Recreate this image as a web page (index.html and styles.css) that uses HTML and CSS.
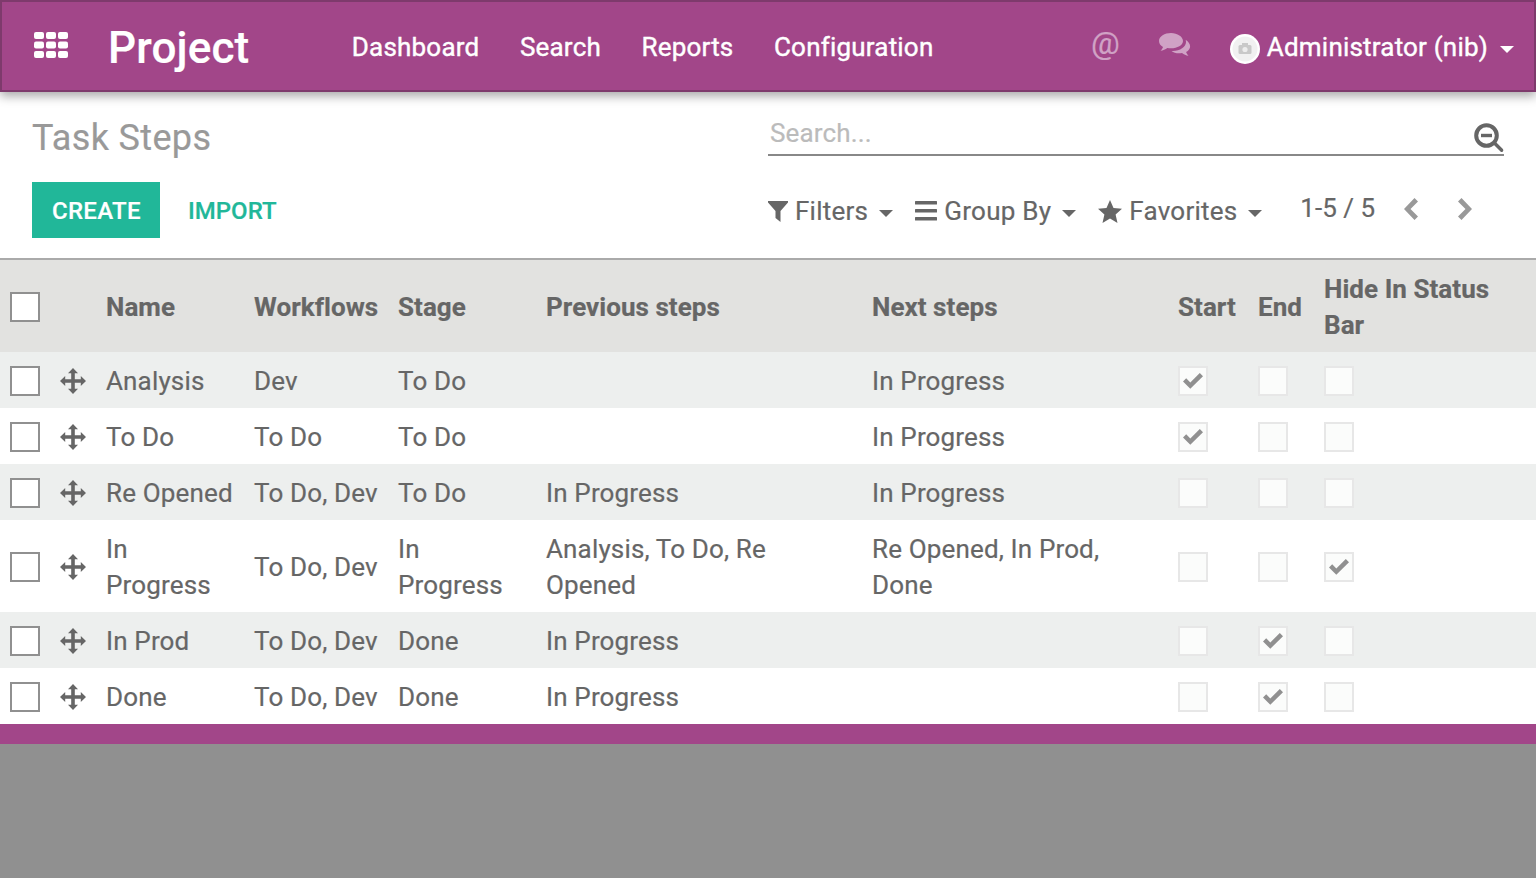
FILE: index.html
```html
<!DOCTYPE html>
<html lang="en">
<head>
<meta charset="utf-8">
<title>Task Steps</title>
<link rel="stylesheet" href="styles.css">
</head>
<body>
<svg class="defs" width="0" height="0" aria-hidden="true">
  <symbol id="move" viewBox="0 0 26 26"><path d="M13 0l5 5.200h-3.200v6h6v-3.200L26 13l-5.200 5v-3.200h-6v6H18L13 26l-5-5.200h3.200v-6h-6V18L0 13l5.200-5v3.200h6v-6H8z"/></symbol>
  <symbol id="check" viewBox="0 0 20 16"><path d="M0 8.500L3.200 5.300 7.300 9.400 16.800 0 20 3.200 7.300 15.800z"/></symbol>
</svg>
<div class="page">
  <header class="navbar">
    <svg class="apps" viewBox="0 0 34 26"><g><rect x="0" y="0" width="10" height="7" rx="2"/><rect x="12" y="0" width="10" height="7" rx="2"/><rect x="24" y="0" width="10" height="7" rx="2"/><rect x="0" y="9.500" width="10" height="7" rx="2"/><rect x="12" y="9.500" width="10" height="7" rx="2"/><rect x="24" y="9.500" width="10" height="7" rx="2"/><rect x="0" y="19" width="10" height="7" rx="2"/><rect x="12" y="19" width="10" height="7" rx="2"/><rect x="24" y="19" width="10" height="7" rx="2"/></g></svg>
    <span class="brand">Project</span>
    <nav class="menu">
      <a>Dashboard</a><a>Search</a><a>Reports</a><a>Configuration</a>
    </nav>
    <div class="systray">
      <span class="at">@</span>
      <svg class="chat" viewBox="0 0 32 26"><path d="M12 1C5.700 1 0 4.500 0 9c0 2.500 1.500 4.500 4 6-.4 1.500-1.300 2.700-2.500 3.800 2.500-.3 5-1.300 6.800-2.800 1.200.2 2.400.3 3.700.3 6.400 0 12-3 12-7.300S18.400 1 12 1z"/><path d="M26.500 7.500c.4 1 .5 1.800.5 2.500 0 5.200-6 8.800-13 9-.7 0-1 0-1.500-.1 1.800 1.500 4.500 2.300 7.500 2.300 1 0 2 0 3-.2 1.800 1.500 4 2.400 6.500 2.800-1.200-1-2-2.300-2.400-3.800 2.500-1.300 4-3.300 4-5.500 0-2.800-2-5.200-4.600-6.800z"/></svg>
      <span class="avatar"><svg viewBox="0 0 30 30"><circle cx="15" cy="15" r="15" fill="#fff"/><circle cx="15" cy="15" r="12.500" fill="#f1f1f1"/><rect x="8.500" y="11" width="13" height="9" rx="1.500" fill="#c9c9c9"/><rect x="12" y="9" width="6" height="3" fill="#c9c9c9"/><circle cx="15" cy="15.500" r="2.600" fill="#ededed"/></svg></span>
      <span class="user">Administrator (nib)</span>
      <span class="caret caret-white"></span>
    </div>
  </header>

  <section class="panel">
    <div class="panel-left">
      <h1 class="title">Task Steps</h1>
      <div class="buttons">
        <button class="btn-create">CREATE</button>
        <button class="btn-import">IMPORT</button>
      </div>
    </div>
    <div class="panel-right">
      <div class="search">
        <span class="placeholder">Search...</span>
        <svg class="search-icon" viewBox="0 0 30 30"><circle cx="12.500" cy="12.500" r="10.300" fill="none" stroke="#666" stroke-width="4"/><rect x="7" y="10.800" width="11" height="3.400" fill="#666"/><path d="M19.500 21.500l2.400-2.400 7 7a1.700 1.700 0 0 1-2.400 2.400z" fill="#666"/></svg>
      </div>
      <div class="controls">
        <div class="filters">
          <span class="filter">
            <svg class="ficon ficon-funnel" viewBox="0 0 20 21"><path d="M0 0h20v1.500L12.500 10v11L7.500 17v-7L0 1.500z"/></svg>Filters<span class="caret"></span>
          </span>
          <span class="filter">
            <svg class="ficon ficon-bars" viewBox="0 0 22 20"><rect y="0" width="22" height="3.600" rx=".5"/><rect y="8" width="22" height="3.600" rx=".5"/><rect y="16" width="22" height="3.600" rx=".5"/></svg>Group By<span class="caret"></span>
          </span>
          <span class="filter">
            <svg class="ficon ficon-star" viewBox="0 0 24 23"><path d="M12 0l3.500 8 8.500.8-6.400 5.700 1.900 8.500L12 18.600 4.500 23l1.900-8.500L0 8.800 8.500 8z"/></svg>Favorites<span class="caret"></span>
          </span>
        </div>
        <div class="pager">
          <span class="pager-text">1-5 / 5</span>
          <svg class="chev chev-prev" viewBox="0 0 16 22"><path d="M11.500 0L15 3.500 7.500 11 15 18.500 11.500 22 1 11z"/></svg>
          <svg class="chev" viewBox="0 0 16 22"><path d="M4.500 0L1 3.500 8.500 11 1 18.500 4.500 22 15 11z"/></svg>
        </div>
      </div>
    </div>
  </section>

  <table class="grid">
    <colgroup>
      <col class="c-sel"><col class="c-handle"><col class="c-name"><col class="c-wf"><col class="c-stage"><col class="c-prev"><col class="c-next"><col class="c-start"><col class="c-end"><col class="c-hide">
    </colgroup>
    <thead>
      <tr>
        <th class="sel"><span class="box"></span></th>
        <th></th>
        <th>Name</th><th>Workflows</th><th>Stage</th><th>Previous steps</th><th>Next steps</th><th>Start</th><th>End</th><th>Hide In Status Bar</th>
      </tr>
    </thead>
    <tbody>
      <tr class="odd">
        <td class="sel"><span class="box"></span></td><td class="handle"><svg class="move"><use href="#move"/></svg></td>
        <td>Analysis</td><td class="wf">Dev</td><td>To Do</td><td></td><td>In Progress</td>
        <td><span class="flag"><svg class="tick"><use href="#check"/></svg></span></td><td><span class="flag"></span></td><td><span class="flag"></span></td>
      </tr>
      <tr>
        <td class="sel"><span class="box"></span></td><td class="handle"><svg class="move"><use href="#move"/></svg></td>
        <td>To Do</td><td class="wf">To Do</td><td>To Do</td><td></td><td>In Progress</td>
        <td><span class="flag"><svg class="tick"><use href="#check"/></svg></span></td><td><span class="flag"></span></td><td><span class="flag"></span></td>
      </tr>
      <tr class="odd">
        <td class="sel"><span class="box"></span></td><td class="handle"><svg class="move"><use href="#move"/></svg></td>
        <td>Re Opened</td><td class="wf">To Do, Dev</td><td>To Do</td><td>In Progress</td><td>In Progress</td>
        <td><span class="flag"></span></td><td><span class="flag"></span></td><td><span class="flag"></span></td>
      </tr>
      <tr>
        <td class="sel"><span class="box"></span></td><td class="handle"><svg class="move"><use href="#move"/></svg></td>
        <td>In Progress</td><td class="wf">To Do, Dev</td><td>In Progress</td><td>Analysis, To Do, Re Opened</td><td>Re Opened, In Prod, Done</td>
        <td><span class="flag"></span></td><td><span class="flag"></span></td><td><span class="flag"><svg class="tick"><use href="#check"/></svg></span></td>
      </tr>
      <tr class="odd">
        <td class="sel"><span class="box"></span></td><td class="handle"><svg class="move"><use href="#move"/></svg></td>
        <td>In Prod</td><td class="wf">To Do, Dev</td><td>Done</td><td>In Progress</td><td></td>
        <td><span class="flag"></span></td><td><span class="flag"><svg class="tick"><use href="#check"/></svg></span></td><td><span class="flag"></span></td>
      </tr>
      <tr>
        <td class="sel"><span class="box"></span></td><td class="handle"><svg class="move"><use href="#move"/></svg></td>
        <td>Done</td><td class="wf">To Do, Dev</td><td>Done</td><td>In Progress</td><td></td>
        <td><span class="flag"></span></td><td><span class="flag"><svg class="tick"><use href="#check"/></svg></span></td><td><span class="flag"></span></td>
      </tr>
    </tbody>
  </table>
  <div class="footer-bar"></div>
  <div class="backdrop"></div>
</div>
</body>
</html>
```
FILE: styles.css
```css
* { box-sizing: border-box; }
html, body { margin: 0; height: 100%; overflow: hidden; }
body { font-family: Roboto, "Liberation Sans", sans-serif; font-size: 26px; line-height: 36px; letter-spacing: .15px; -webkit-text-stroke: .2px; color: #666; background: #fff; }
.defs { position: absolute; }
.page { display: flex; flex-direction: column; height: 878px; }

.navbar { position: relative; z-index: 2; flex: none; display: flex; align-items: center; height: 92px; padding: 0 20px 0 34px; background: #a24689; border: 2px solid #7e3a6c; box-shadow: 0 4px 10px rgba(0,0,0,.35); color: #fff; }
.apps { flex: none; width: 34px; height: 26px; margin: -2px 0 0 -2px; fill: #fff; }
.brand { margin: 3px 0 0 40px; font-size: 44px; font-weight: 500; line-height: 50px; letter-spacing: .15px; }
.menu { display: flex; gap: 40.500px; margin: 2px 0 0 102.500px; letter-spacing: .2px; -webkit-text-stroke: .4px #fff; }
.systray { display: flex; align-items: center; margin-left: auto; letter-spacing: .2px; }
.at { font-size: 32px; line-height: 36px; color: #d0a2c5; margin-top: -6px; }
.chat { width: 32px; height: 26px; fill: #d0a2c5; margin: -2px 0 0 39px; }
.avatar { display: block; width: 30px; height: 30px; margin: 6px 7px 0 39px; }
.avatar svg { display: block; width: 30px; height: 30px; }
.user { margin-top: 2px; -webkit-text-stroke: .4px #fff; }
.caret { display: inline-block; width: 0; height: 0; margin-left: 11px; border-top: 7px solid #666; border-left: 7.500px solid transparent; border-right: 7.500px solid transparent; vertical-align: middle; }
.caret-white { margin-left: 12px; margin-top: 6px; border-top-color: #fff; }

.panel { flex: none; display: flex; height: 168px; padding: 0 32px; border-bottom: 2px solid #aaa; }
.panel-left { width: 736px; }
.title { margin: 24px 0 0; font-size: 36px; line-height: 44px; font-weight: 400; letter-spacing: .35px; color: #999; }
.buttons { display: flex; margin-top: 22px; }
.btn-create, .btn-import { height: 56px; padding: 2px 20px 0; border: 0; font: 500 24px/36px Roboto, sans-serif; letter-spacing: .3px; }
.btn-create { width: 128px; background: #21b799; color: #fff; }
.btn-import { margin-left: 8px; background: none; color: #21b799; letter-spacing: 0; }

.panel-right { width: 736px; }
.search { display: flex; align-items: flex-end; justify-content: space-between; height: 46px; margin-top: 18px; padding: 0 0 3px 2px; border-bottom: 2px solid #888; }
.placeholder { color: #bbb; }
.search-icon { width: 30px; height: 30px; margin-bottom: -2px; }
.controls { display: flex; align-items: center; justify-content: space-between; margin-top: 33px; height: 44px; }
.filters { display: flex; gap: 22.500px; letter-spacing: .25px; }
.filter { display: flex; align-items: center; }
.filter .caret { margin-top: 5px; margin-left: 10.500px; }
.ficon { flex: none; fill: #666; }
.ficon-funnel { width: 20px; height: 21px; margin-right: 7px; }
.ficon-bars { width: 22px; height: 20px; margin-right: 7px; }
.ficon-star { width: 24px; height: 23px; margin-right: 7px; }
.pager { display: flex; align-items: center; margin: -5px 31px 0 0; }
.pager-text { margin: -2px 28px 0 0; letter-spacing: 0; }
.chev { width: 16px; height: 22px; fill: #999; }
.chev-prev { margin-right: 38px; }

.grid { flex: none; width: 1536px; table-layout: fixed; border-collapse: collapse; }
.c-sel { width: 50px; } .c-handle { width: 46px; } .c-name { width: 148px; } .c-wf { width: 144px; } .c-stage { width: 148px; } .c-prev { width: 326px; } .c-next { width: 306px; } .c-start { width: 80px; } .c-end { width: 66px; } .c-hide { width: 222px; }
.grid th, .grid td { padding: 11px 10px 9px; text-align: left; vertical-align: middle; }
.grid th { height: 92px; background: #e2e2e0; font-weight: 700; letter-spacing: .05px; color: #666; }
.grid td { height: 56px; }
.grid .wf { white-space: nowrap; }
.grid tr.odd td { background: #edefee; }
.box { display: block; width: 30px; height: 30px; background: #fff; border: 2px solid #909090; }
.grid .handle { padding: 11px 0 9px 10px; }
.move { display: block; width: 26px; height: 26px; fill: #666; }
.flag { display: flex; align-items: center; justify-content: center; width: 30px; height: 30px; background: #fbfcfb; border: 2px solid #e7e7e7; }
.tick { width: 20px; height: 16px; fill: #909090; }

.footer-bar { flex: none; height: 20px; background: #a24689; }
.backdrop { flex: 1; background: #909090; }
```
